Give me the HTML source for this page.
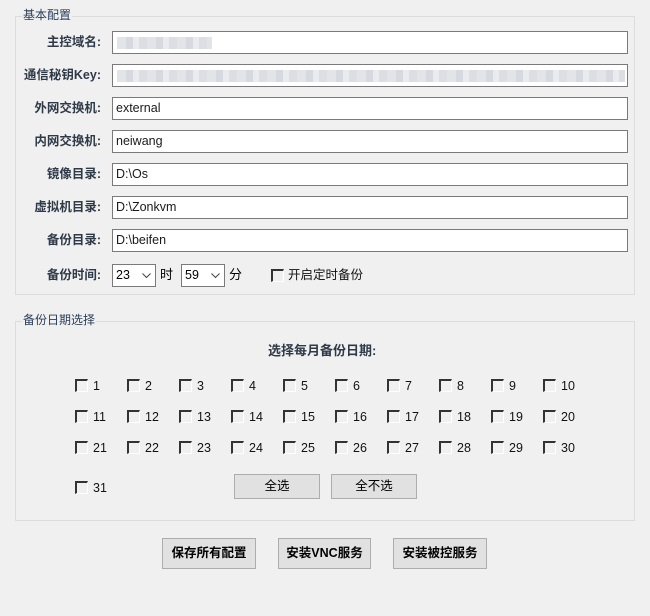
<!DOCTYPE html>
<html><head><meta charset="utf-8"><style>
*{margin:0;padding:0;box-sizing:border-box}
body{width:650px;height:616px;background:#f0f0f0;position:relative;overflow:hidden;font-family:"Microsoft YaHei","Liberation Sans","Noto Sans CJK SC",sans-serif;font-size:13px;color:#000}
.a{position:absolute;white-space:nowrap}
.grp{position:absolute;border:1px solid #dcdcdc}
.gt{position:absolute;background:#f0f0f0;color:#2a3f5a;font-size:12px;padding:0 1px;line-height:14px}
.lb{position:absolute;right:549px;font-weight:bold;color:#2f3a48;font-size:12.5px;line-height:22px;white-space:nowrap}
.in{position:absolute;left:112px;width:516px;height:23px;background:#fff;border:1px solid #7a7a7a;padding-left:3px;line-height:21px;font-size:12.5px;color:#1a1a1a}
.blur{position:absolute;top:5px;height:12px;background:repeating-linear-gradient(90deg,#dfe1e6 0 9px,#d2d5dc 9px 16px,#e8e9ec 16px 22px,#d8dae0 22px 30px);opacity:.9}
.sel{position:absolute;top:264px;height:23px;background:#fff;border:1px solid #7a7a7a;padding-left:3px;line-height:21px;font-size:12.5px}
.sel svg{position:absolute;right:4px;top:8px}
.cb{position:absolute;width:13px;height:13px;border-top:2px solid #333;border-left:2px solid #333;border-right:1px solid #fff;border-bottom:1px solid #fff;background:#f0f0f0}
.cl{position:absolute;line-height:14px;font-size:12.5px;color:#111}
.btn{position:absolute;background:#e1e1e1;border:1px solid #adadad;text-align:center;font-size:12.5px}
</style></head><body>
<div class="grp" style="left:15px;top:16px;width:620px;height:279px"></div>
<div class="gt" style="left:22px;top:8px">基本配置</div>

<div class="lb" style="top:31px">主控域名:</div>
<div class="in" style="top:31px"><div class="blur" style="left:4px;width:95px"></div></div>
<div class="lb" style="top:64px">通信秘钥Key:</div>
<div class="in" style="top:64px"><div class="blur" style="left:4px;width:508px"></div></div>
<div class="lb" style="top:97px">外网交换机:</div>
<div class="in" style="top:97px">external</div>
<div class="lb" style="top:130px">内网交换机:</div>
<div class="in" style="top:130px">neiwang</div>
<div class="lb" style="top:163px">镜像目录:</div>
<div class="in" style="top:163px">D:\Os</div>
<div class="lb" style="top:196px">虚拟机目录:</div>
<div class="in" style="top:196px">D:\Zonkvm</div>
<div class="lb" style="top:229px">备份目录:</div>
<div class="in" style="top:229px">D:\beifen</div>

<div class="lb" style="top:264px">备份时间:</div>
<div class="sel" style="left:112px;width:44px">23<svg width="9" height="6"><path d="M0.5 0.5L4.5 4.5L8.5 0.5" stroke="#444" fill="none"/></svg></div>
<div class="a" style="left:160px;top:264px;line-height:22px">时</div>
<div class="sel" style="left:181px;width:44px">59<svg width="9" height="6"><path d="M0.5 0.5L4.5 4.5L8.5 0.5" stroke="#444" fill="none"/></svg></div>
<div class="a" style="left:229px;top:264px;line-height:22px">分</div>
<div class="cb" style="left:271px;top:269px"></div>
<div class="cl" style="left:288px;top:268px">开启定时备份</div>

<div class="grp" style="left:15px;top:321px;width:620px;height:200px"></div>
<div class="gt" style="left:22px;top:313px">备份日期选择</div>
<div class="a" style="left:268px;top:343px;font-weight:bold;color:#2f3a48;line-height:16px">选择每月备份日期:</div>

<div id="g"></div>
<script>
var h='',rows=[379,410,441];
for(var r=0;r<3;r++)for(var c=0;c<10;c++){var n=r*10+c+1,x=75+c*52,y=rows[r];
h+='<div class="cb" style="left:'+x+'px;top:'+y+'px"></div><div class="cl" style="left:'+(x+18)+'px;top:'+y+'px">'+n+'</div>';}
h+='<div class="cb" style="left:75px;top:481px"></div><div class="cl" style="left:93px;top:481px">31</div>';
document.getElementById('g').innerHTML=h;
</script>

<div class="btn" style="left:234px;top:474px;width:86px;height:25px;line-height:23px">全选</div>
<div class="btn" style="left:331px;top:474px;width:86px;height:25px;line-height:23px">全不选</div>

<div class="btn" style="left:162px;top:538px;width:94px;height:31px;line-height:29px;font-weight:bold">保存所有配置</div>
<div class="btn" style="left:278px;top:538px;width:93px;height:31px;line-height:29px;font-weight:bold">安装VNC服务</div>
<div class="btn" style="left:393px;top:538px;width:94px;height:31px;line-height:29px;font-weight:bold">安装被控服务</div>
</body></html>
